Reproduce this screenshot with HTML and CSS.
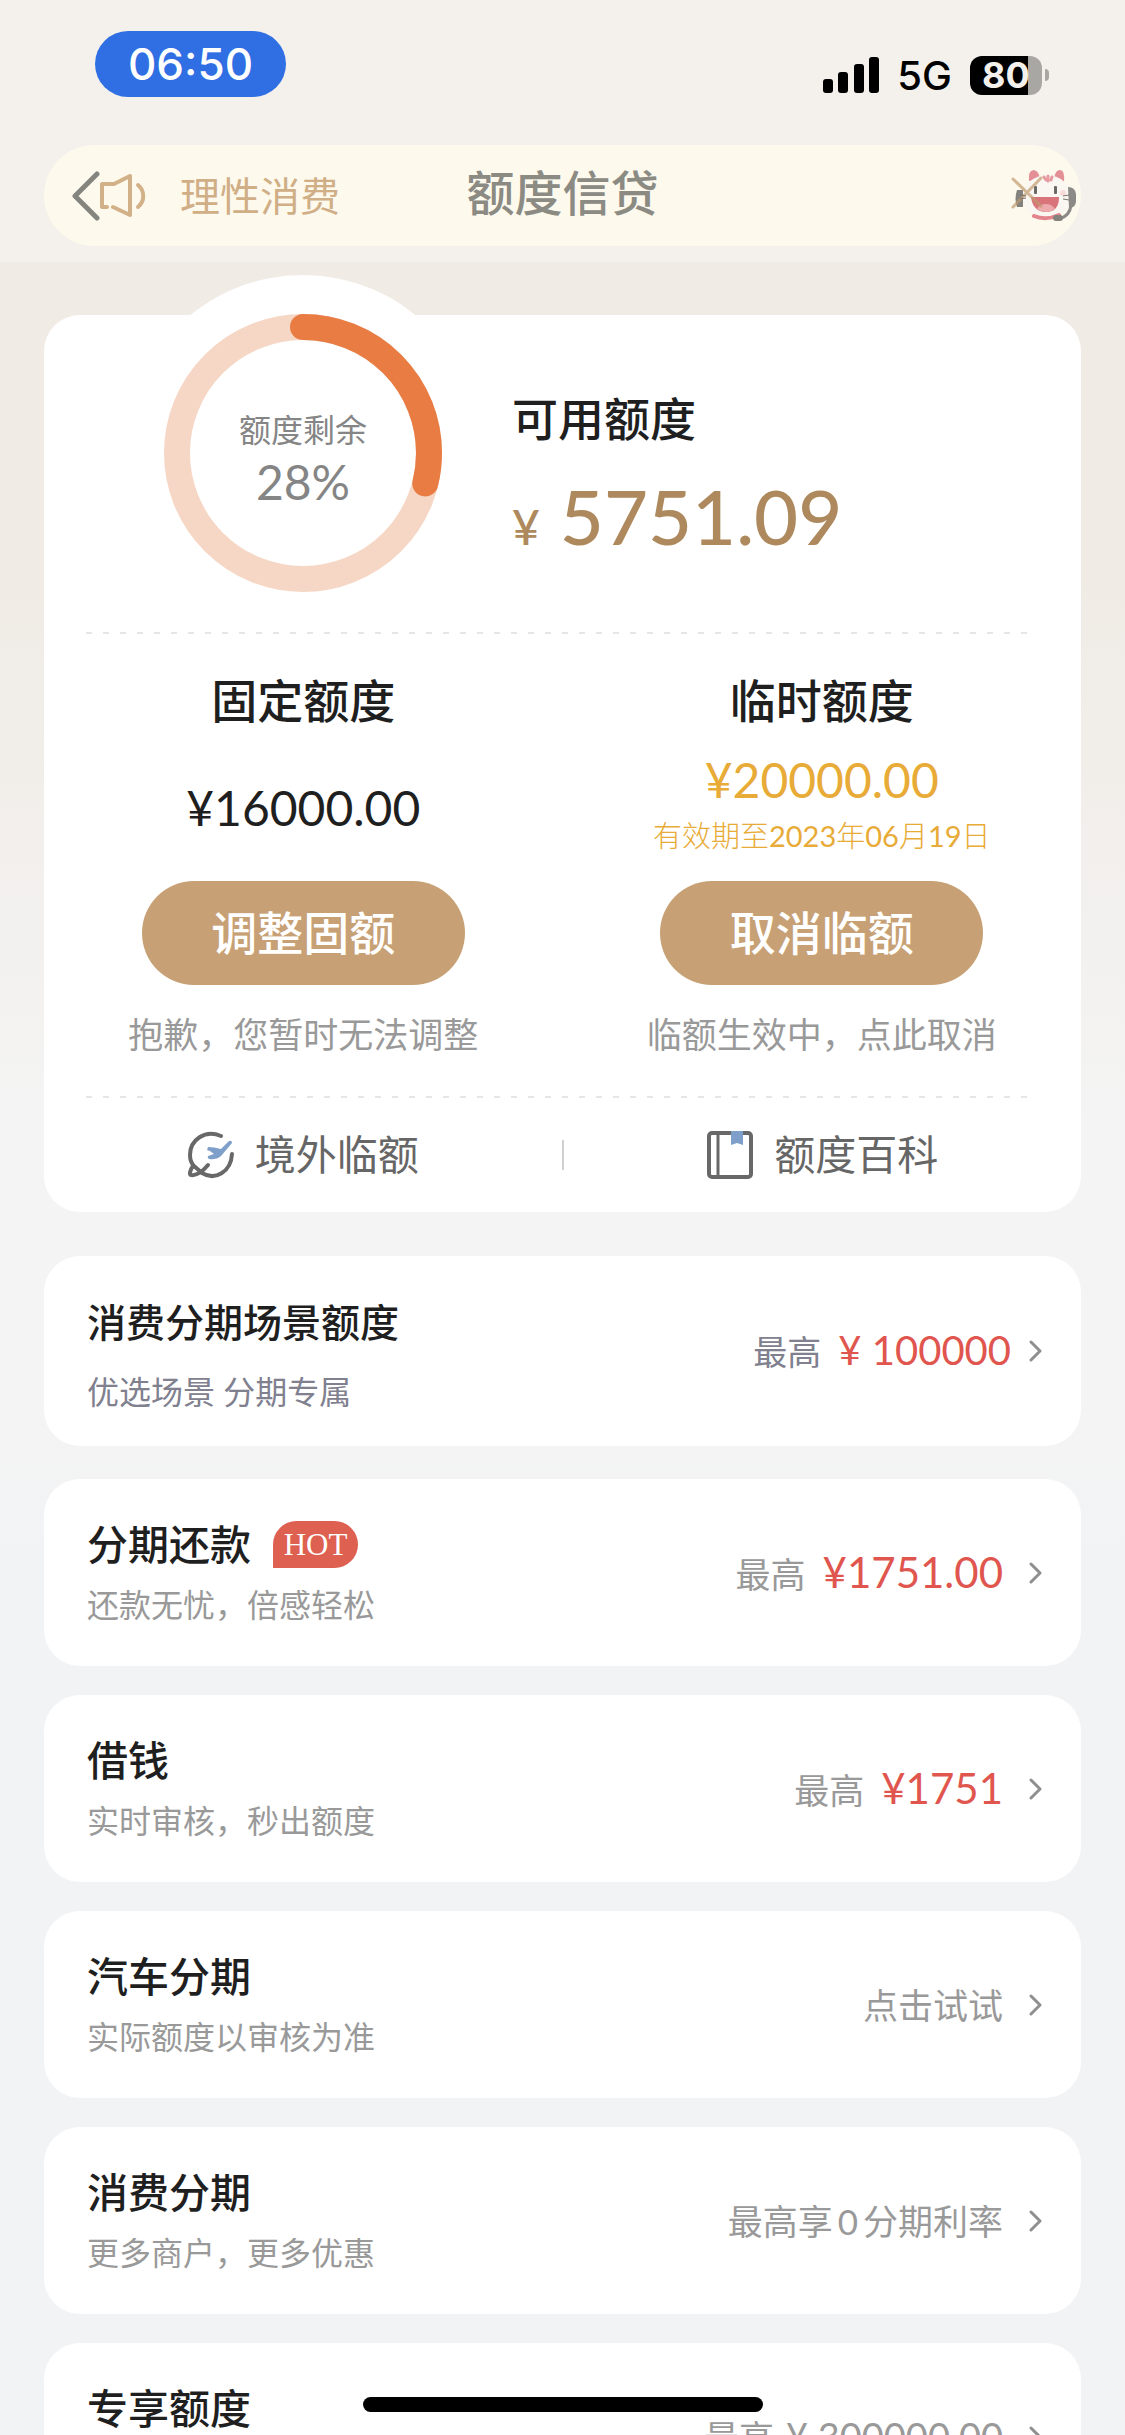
FILE: index.html
```html
<!DOCTYPE html>
<html lang="zh-CN">
<head>
<meta charset="utf-8">
<meta name="viewport" content="width=device-width, initial-scale=1">
<title>额度信贷</title>
<link rel="stylesheet" href="styles.css">
</head>
<body>
<div class="screen">
  <header class="top">
    <div class="status">
      <span class="clock">06:50</span>
      <div class="signals">
        <svg class="bars" viewBox="0 0 56 36" aria-hidden="true">
          <rect x="0" y="22" width="10" height="14" rx="3"/><rect x="15" y="15" width="10" height="21" rx="3"/><rect x="31" y="7" width="10" height="29" rx="3"/><rect x="46" y="0" width="10" height="36" rx="3"/>
        </svg>
        <span class="network">5G</span>
        <span class="battery"><span class="cell">80</span><span class="nub"></span></span>
      </div>
    </div>
    <div class="notice">
      <button class="back" aria-label="返回">
        <svg viewBox="0 0 28 50" aria-hidden="true"><path d="M25 3 3 25 25 47" fill="none" stroke="#85857f" stroke-width="5" stroke-linecap="round" stroke-linejoin="round"/></svg>
      </button>
      <svg class="horn" viewBox="0 0 46 44" aria-hidden="true">
        <g fill="none" stroke="#d3b188" stroke-width="4" stroke-linecap="round" stroke-linejoin="round"><path d="M7 33H2V10H14L30 2V41L13 33"/><path d="M38 11C45 17 45 27 38 33"/></g>
      </svg>
      <span class="notice-text">理性消费</span>
      <h1 class="title">额度信贷</h1>
      <button class="service" aria-label="在线客服">
        <svg viewBox="0 0 66 54" aria-hidden="true">
          <path d="M6 21h6v17H6q-3-8 0-17" fill="#84827e"/>
          <path d="M18 12Q17 1 23 1q5 1 6 9zM43 10q1-9 6-9 5 0 4 12z" fill="#e48f96"/>
          <ellipse cx="36" cy="28" rx="24" ry="22" fill="#faf6f2"/>
          <path d="M33 8l2 3M37 7v5M41 8l-1 3" fill="none" stroke="#e79aa0" stroke-width="3" stroke-linecap="round"/>
          <path d="M23 47q12 5 25-1" fill="none" stroke="#e3838b" stroke-width="4" stroke-linecap="round"/>
          <rect x="23" y="17" width="3" height="8" rx="1" fill="#6b6966"/><rect x="43" y="17" width="3" height="8" rx="1" fill="#6b6966"/>
          <path d="M20 28h28q0 15-13 15T20 28" fill="#d8747a"/><path d="M26 40q3-5 9-5t9 5q-9 6-18 0" fill="#ecaaac"/>
          <circle cx="52" cy="24" r="3" fill="#f8dcd9"/>
          <path d="M57 18q7 0 8 7v8q-1 6-7 6z" fill="#8c8a86"/><path d="M60 36q-1 11-12 14" fill="none" stroke="#8c8a86" stroke-width="3"/><rect x="42" y="46" width="10" height="6" rx="3" fill="#84827e"/>
          <path d="M2 10 30 37M2 38 30 9" stroke="#c19b6e" stroke-opacity=".7" stroke-width="3" stroke-linecap="round"/>
          <path d="M9 26l6 1M9 30l6-1M52 27l6-1M52 30l6 1" stroke="#77736e" stroke-width="1"/>
        </svg>
      </button>
    </div>
  </header>

  <main class="content">
    <section class="card summary">
      <div class="overview">
        <div class="gauge">
          <svg class="ring" viewBox="0 0 278 278" aria-hidden="true">
            <circle cx="139" cy="139" r="126" fill="none" stroke="#f6d7c5" stroke-width="26"/>
            <circle cx="139" cy="139" r="126" fill="none" stroke="#e87c43" stroke-width="26" stroke-linecap="round" pathLength="360" stroke-dasharray="104 256" transform="rotate(-90 139 139)"/>
          </svg>
          <div class="gauge-label"><span class="gauge-name">额度剩余</span><span class="gauge-value">28%</span></div>
        </div>
        <div class="available">
          <h2 class="heading">可用额度</h2>
          <p class="balance"><span class="balance-sign">¥</span>5751.09</p>
        </div>
      </div>
      <div class="dashes"></div>
      <div class="limits">
        <div class="limit">
          <h2 class="heading">固定额度</h2>
          <div class="figures single"><span class="amount">¥16000.00</span></div>
          <button class="action">调整固额</button>
          <p class="hint">抱歉，您暂时无法调整</p>
        </div>
        <div class="limit">
          <h2 class="heading">临时额度</h2>
          <div class="figures gold"><span class="amount">¥20000.00</span><span class="expiry">有效期至<b>2023</b>年<b>06</b>月<b>19</b>日</span></div>
          <button class="action">取消临额</button>
          <p class="hint">临额生效中，点此取消</p>
        </div>
      </div>
      <div class="dashes"></div>
      <nav class="links">
        <a class="link" href="#">
          <svg class="link-icon" viewBox="0 0 48 48" aria-hidden="true">
            <g fill="none" stroke="#686868" stroke-width="4" stroke-linecap="round" stroke-linejoin="round"><path d="M34 5C18-2 3 9 3 24c0 5 1 8 4 11l8 7c13 8 29-1 30-19"/><path d="M6 35c-3 4-4 9-2 9 6 1 12-4 17-10"/></g>
            <path d="M21 16q6 0 13 2l8-8q3-1 3 2L34 25q-5 4-12 3-2-1-1-3l6-2q-3-3-7-4z" fill="#7f9fcb"/>
          </svg>境外临额</a>
        <span class="separator"></span>
        <a class="link" href="#">
          <svg class="link-icon" viewBox="0 0 48 48" aria-hidden="true">
            <rect x="3" y="2" width="42" height="44" rx="3" fill="none" stroke="#686868" stroke-width="4"/><path d="M12 2v45" stroke="#686868" stroke-width="3"/><path d="M25 0h12v14l-6-2-6 2z" fill="#7f9fcb"/>
          </svg>额度百科</a>
      </nav>
    </section>

    <a class="card product scene" href="#">
      <span class="info"><span class="name">消费分期场景额度</span><span class="desc">优选场景 分期专属</span></span>
      <span class="offer">最高<span class="price">¥ 100000</span></span>
      <svg class="chevron" viewBox="0 0 14 22" aria-hidden="true"><path d="M2 2 11 11 2 20"/></svg>
    </a>
    <div class="products">
      <a class="card product" href="#">
        <span class="info"><span class="name">分期还款<span class="hot">HOT</span></span><span class="desc">还款无忧，倍感轻松</span></span>
        <span class="offer">最高<span class="price">¥1751.00</span></span>
        <svg class="chevron" viewBox="0 0 14 22" aria-hidden="true"><path d="M2 2 11 11 2 20"/></svg>
      </a>
      <a class="card product" href="#">
        <span class="info"><span class="name">借钱</span><span class="desc">实时审核，秒出额度</span></span>
        <span class="offer">最高<span class="price">¥1751</span></span>
        <svg class="chevron" viewBox="0 0 14 22" aria-hidden="true"><path d="M2 2 11 11 2 20"/></svg>
      </a>
      <a class="card product" href="#">
        <span class="info"><span class="name">汽车分期</span><span class="desc">实际额度以审核为准</span></span>
        <span class="offer">点击试试</span>
        <svg class="chevron" viewBox="0 0 14 22" aria-hidden="true"><path d="M2 2 11 11 2 20"/></svg>
      </a>
      <a class="card product" href="#">
        <span class="info"><span class="name">消费分期</span><span class="desc">更多商户，更多优惠</span></span>
        <span class="offer">最高享<span class="zero">0</span>分期利率</span>
        <svg class="chevron" viewBox="0 0 14 22" aria-hidden="true"><path d="M2 2 11 11 2 20"/></svg>
      </a>
      <a class="card product" href="#">
        <span class="info"><span class="name">专享额度</span><span class="desc"></span></span>
        <span class="offer">最高<span class="limit-value">¥ 300000.00</span></span>
        <svg class="chevron" viewBox="0 0 14 22" aria-hidden="true"><path d="M2 2 11 11 2 20"/></svg>
      </a>
    </div>
  </main>
  <div class="home-indicator"></div>
</div>
</body>
</html>
```
FILE: styles.css
```css
* { box-sizing: border-box; }
body, h1, h2, p { margin: 0; }
body {
  font-family: Lato, "Noto Sans CJK SC", sans-serif;
  color: #1f1f1f;
}
button { border: 0; padding: 0; background: none; font: inherit; color: inherit; }
a { color: inherit; text-decoration: none; }
svg { display: block; flex: none; }

.screen {
  display: flex;
  flex-direction: column;
  height: 100vh;
  overflow: hidden;
  background: linear-gradient(#f0ebe5 0, #f0ebe5 24%, #f4f4f4 46%, #f4f4f4 58%, #f2f3f5 64%);
}

/* status bar and title */
.top { flex: none; padding: 31px 44px 16px; background: #f4f1ec; }
.status {
  display: flex;
  justify-content: space-between;
  height: 114px;
  padding: 0 32px 0 51px;
  font-family: Inter, "Liberation Sans", sans-serif;
}
.clock {
  width: 191px;
  height: 66px;
  border-radius: 33px;
  background: #306fe3;
  color: #fff;
  font-size: 44px;
  font-weight: 500;
  line-height: 66px;
  text-align: center;
}
.signals { display: flex; align-items: center; height: 88px; color: #000; }
.bars { width: 56px; height: 36px; }
.network { margin: 0 18px; font-size: 40px; font-weight: 500; }
.battery { display: flex; align-items: center; gap: 3px; }
.cell {
  width: 72px;
  height: 39px;
  padding-left: 12px;
  border-radius: 12px;
  background: linear-gradient(90deg, #000 58px, #a9a7a3 58px);
  color: #f4f1ec;
  font-size: 36px;
  font-weight: 700;
  line-height: 39px;
}
.nub { width: 4px; height: 12px; border-radius: 0 6px 6px 0; background: #a9a7a3; }

.notice {
  position: relative;
  display: flex;
  align-items: center;
  height: 101px;
  padding: 0 4px 0 28px;
  border-radius: 51px;
  background: #fdf9ed;
}
.back svg { width: 28px; height: 50px; }
.horn { width: 46px; height: 44px; margin-right: 34px; }
.notice-text { font-size: 40px; line-height: 56px; color: #d0ae86; }
.title {
  position: absolute;
  inset: 0;
  font-size: 48px;
  font-weight: 500;
  line-height: 96px;
  text-align: center;
  color: #8b8a83;
  pointer-events: none;
}
.service { margin-left: auto; }
.service svg { width: 66px; height: 54px; }

.content {
  flex: 1;
  min-height: 0;
  padding: 53px 44px 0;
  overflow-y: auto;
  scrollbar-width: none;
}
.card { background: #fff; border-radius: 36px; }

/* summary card */
.overview { display: flex; gap: 31px; padding-left: 81px; }
.gauge {
  display: grid;
  place-items: center;
  flex: none;
  width: 356px;
  height: 356px;
  margin-top: -40px;
  border-radius: 50%;
  background: #fff;
}
.ring, .gauge-label { grid-area: 1 / 1; }
.ring { width: 278px; height: 278px; }
.gauge-label {
  display: flex;
  flex-direction: column;
  align-items: center;
  padding-top: 10px;
  color: #858585;
}
.gauge-name { font-size: 32px; line-height: 48px; }
.gauge-value { font-size: 48px; line-height: 56px; }
.available { padding-top: 78px; }
.heading { font-size: 46px; font-weight: 500; line-height: 52px; }
.balance {
  margin-top: 23px;
  font-size: 76px;
  font-weight: 500;
  line-height: 96px;
  color: #ad895d;
}
.balance-sign { margin-right: 20px; font-size: 48px; }
.dashes {
  height: 2px;
  margin: 1px 52px 0 42px;
  background: repeating-linear-gradient(90deg, #e6e6e6 0 6px, transparent 6px 17px);
}
.limits { display: grid; grid-template-columns: 1fr 1fr; padding-bottom: 37px; }
.limit { display: flex; flex-direction: column; align-items: center; padding-top: 41px; }
.figures {
  display: flex;
  flex-direction: column;
  justify-content: center;
  align-items: center;
  gap: 8px;
  height: 154px;
}
.single { padding-top: 8px; }
.gold { color: #e8ab37; }
.amount { font-size: 48px; line-height: 56px; }
.expiry { font-size: 29px; font-weight: 300; line-height: 40px; }
.expiry b { font-weight: 400; }
.action {
  width: 323px;
  height: 104px;
  border-radius: 52px;
  background: #c7a175;
  color: #fff;
  font-size: 46px;
  font-weight: 500;
  line-height: 104px;
}
.hint { margin-top: 25px; font-size: 35px; line-height: 48px; color: #999; }
.links { display: grid; grid-template-columns: 1fr 2px 1fr; align-items: center; height: 114px; }
.link {
  display: flex;
  justify-content: center;
  align-items: center;
  gap: 20px;
  font-size: 41px;
  line-height: 56px;
  color: #666;
}
.link-icon { width: 48px; height: 48px; }
.separator { height: 30px; background: #d0d0d0; }

/* product list */
.product {
  display: flex;
  align-items: center;
  height: 187px;
  padding: 0 38px 0 43px;
  font-size: 35px;
  color: #999;
}
.products { display: flex; flex-direction: column; gap: 29px; margin-top: 33px; }
.info { display: flex; flex-direction: column; gap: 12px; padding-top: 4px; }
.name {
  display: flex;
  align-items: center;
  gap: 22px;
  font-size: 41px;
  font-weight: 500;
  line-height: 48px;
  color: #1f1f1f;
}
.desc { min-height: 48px; font-size: 32px; line-height: 48px; }
.hot {
  width: 85px;
  height: 47px;
  border-radius: 24px 24px 24px 0;
  background: #de6050;
  color: #fff;
  font-family: "Liberation Serif", serif;
  font-size: 31px;
  font-weight: 400;
  line-height: 47px;
  text-align: center;
}
.offer { margin-left: auto; line-height: 56px; }
.price { margin-left: 17px; font-size: 42px; color: #e0564f; }
.zero { margin: 0 5px; }
.limit-value { margin-left: 12px; font-size: 38px; }
.chevron { width: 14px; height: 22px; margin-left: 26px; }
.chevron path { fill: none; stroke: #8f8f8f; stroke-width: 3; stroke-linecap: round; stroke-linejoin: round; }
.scene { height: 190px; margin-top: 44px; font-size: 34px; color: #80808f; }
.scene .info { gap: 22px; padding-top: 12px; }
.scene .name { font-size: 39px; }
.scene .price { font-size: 40px; }
.scene .chevron { margin-left: 18px; }

.home-indicator {
  position: fixed;
  bottom: 23px;
  left: 50%;
  width: 400px;
  height: 15px;
  margin-left: -200px;
  border-radius: 8px;
  background: #000;
}
```
